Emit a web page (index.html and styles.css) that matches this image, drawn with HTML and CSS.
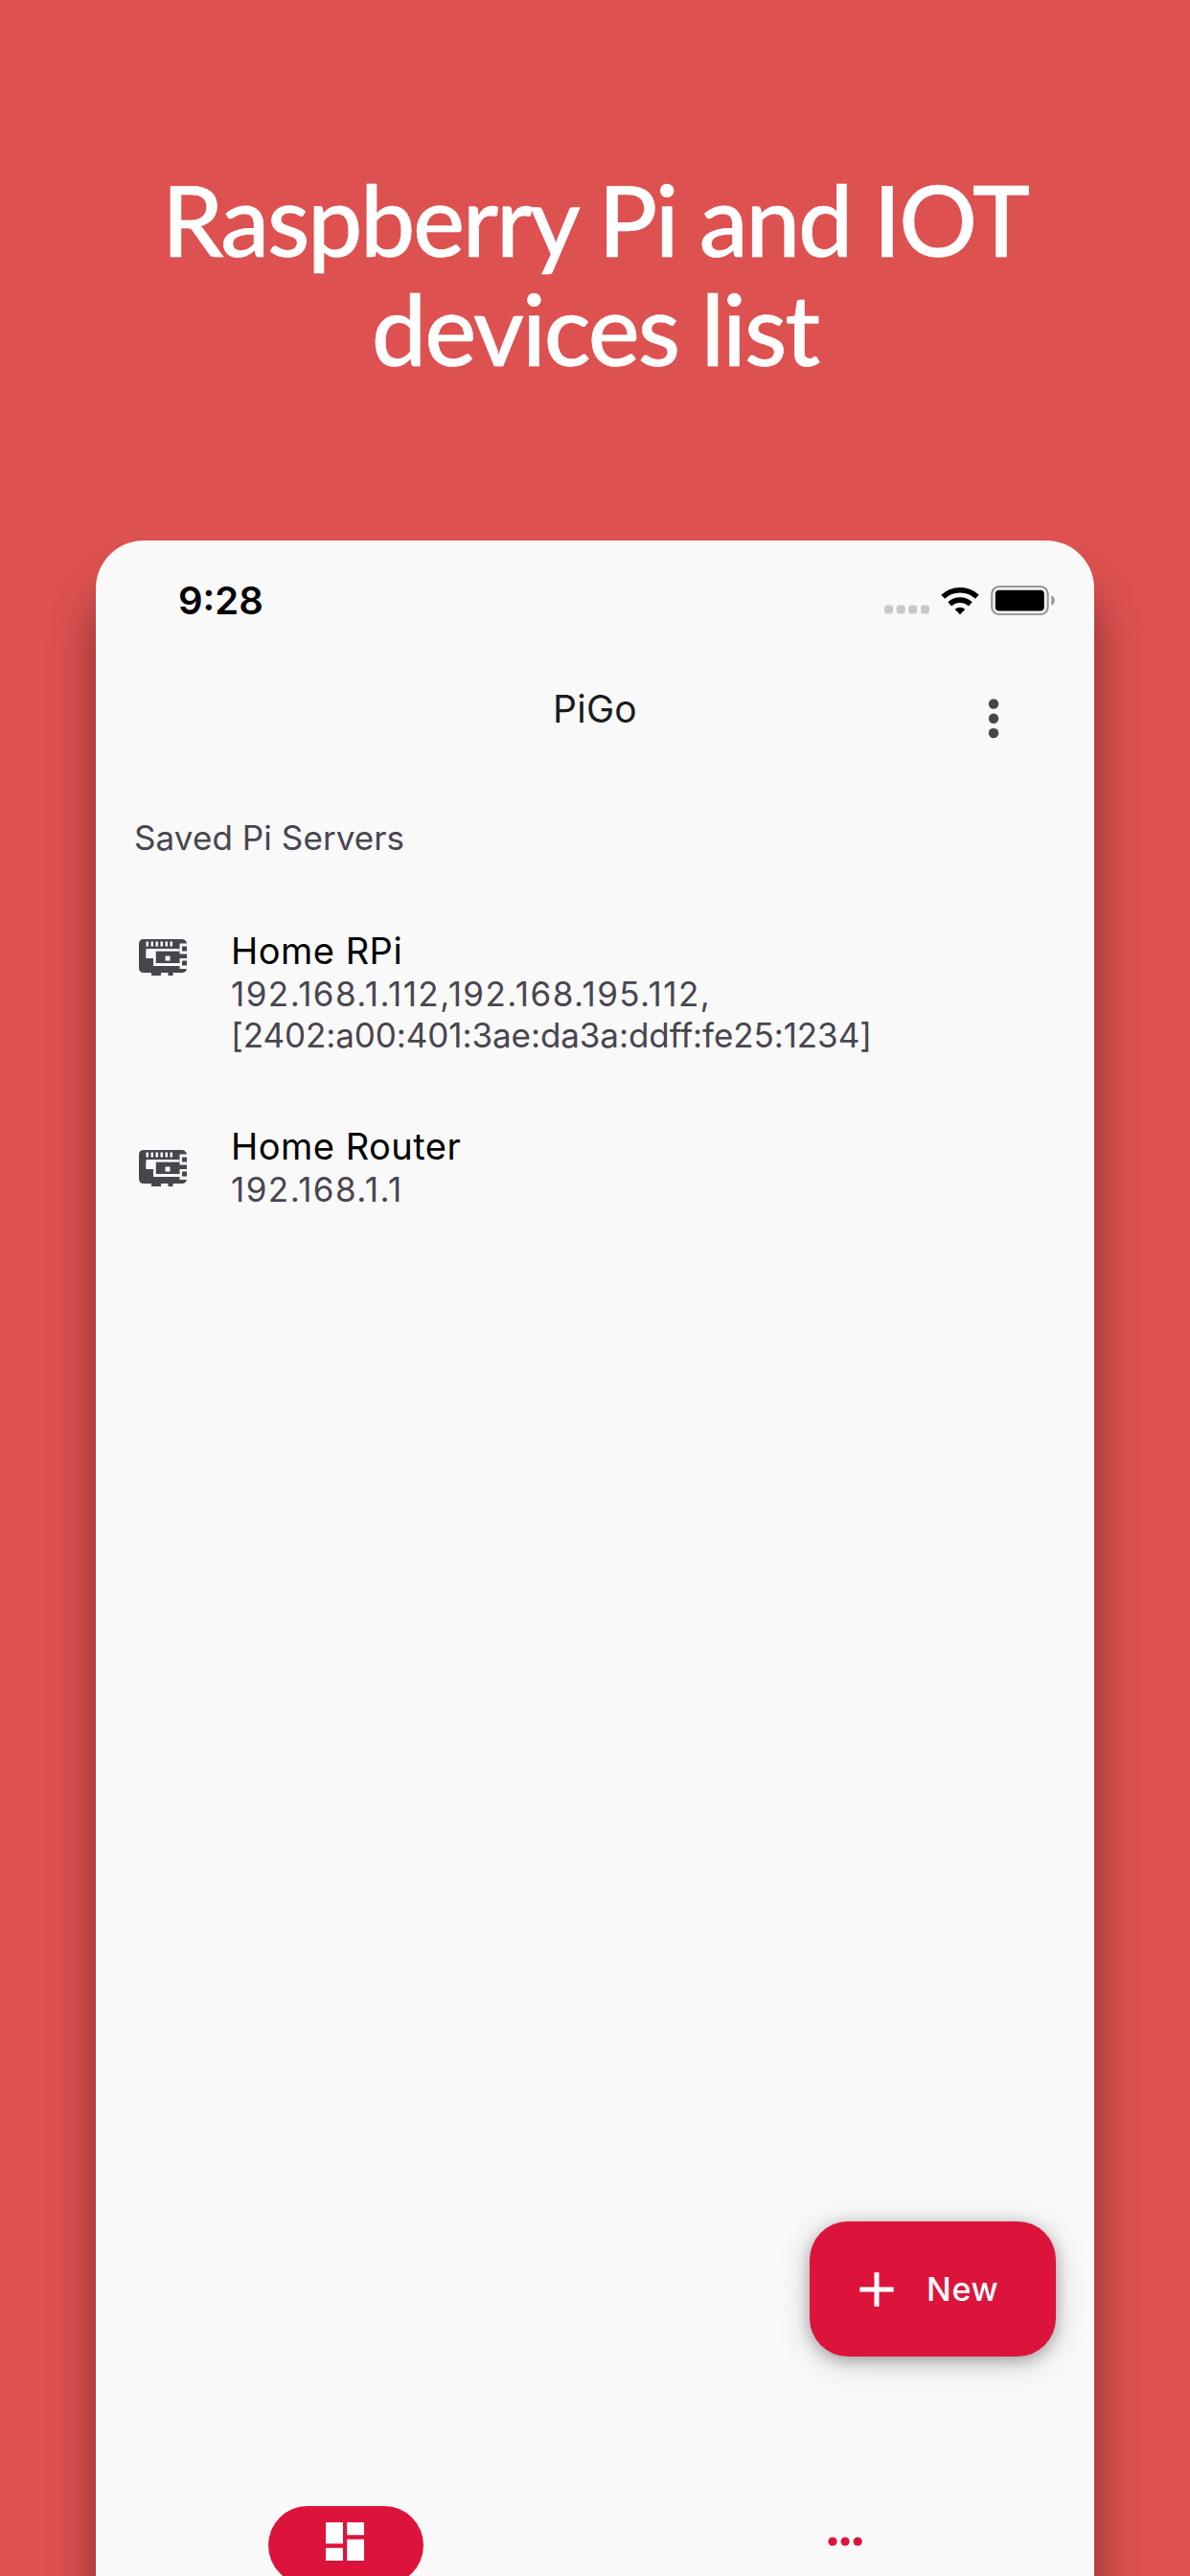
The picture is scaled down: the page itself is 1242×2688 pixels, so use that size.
FILE: index.html
```html
<!DOCTYPE html>
<html lang="en">
<head>
<meta charset="utf-8">
<title>PiGo</title>
<link rel="stylesheet" href="styles.css">
</head>
<body>
<h1 class="headline"><span class="line line-a">Raspberry Pi and IOT</span><span class="line line-b">devices list</span></h1>
<main class="phone">
  <div class="status">
    <span class="time">9:28</span>
    <svg class="status-icons" viewBox="0 0 182 36" width="182" height="36">
      <g fill="#c8c8c8"><rect x="2" y="23.500" width="9" height="9" rx="3"/><rect x="14.7" y="23.500" width="9" height="9" rx="3"/><rect x="27.3" y="23.500" width="9" height="9" rx="3"/><rect x="40" y="23.500" width="9" height="9" rx="3"/></g>
      <path d="M81 33.2l-5.4-5.5a8.4 8.4 0 0 1 10.8 0z"/>
      <path d="M70.2 22.3a16.2 16.2 0 0 1 21.6 0M63.2 14.8a26 26 0 0 1 35.6 0" fill="none" stroke="#000" stroke-width="5.6"/>
      <rect x="114.2" y="4.2" width="58.4" height="28.8" rx="7.5" fill="none" stroke="#9b9a9e" stroke-width="2.2"/>
      <rect x="117.8" y="7.8" width="51" height="21.6" rx="4"/>
      <path d="M176.2 13.6c5 1.5 5 8.700 0 10.200z" fill="#9b9a9e"/>
    </svg>
  </div>
  <header class="appbar">
    <span class="title">PiGo</span>
    <svg class="more" viewBox="0 0 12 42" width="12" height="42" fill="#49454f"><circle cx="6" cy="5.500" r="5.200"/><circle cx="6" cy="20.800" r="5.200"/><circle cx="6" cy="36" r="5.200"/></svg>
  </header>
  <h2 class="section">Saved Pi Servers</h2>
  <ul class="servers">
    <li class="server">
      <svg class="board" viewBox="0 0 50 38" width="50" height="38"><use href="#board"/></svg>
      <div><div class="name">Home RPi</div><div class="addr">192.168.1.112,192.168.195.112,</div><div class="addr v6">[2402:a00:401:3ae:da3a:ddff:fe25:1234]</div></div>
    </li>
    <li class="server second">
      <svg class="board" viewBox="0 0 50 38" width="50" height="38">
        <g id="board">
          <path fill="#49454f" d="M5 0H45Q49 0 50 4.500H42.500V12.500H7.500V20H15V28H42.500V31H50Q49 35 45 35H35.500V38H30.500V35H23V38H13V35H5Q0 35 0 30V5Q0 0 5 0Z"/>
          <path fill="#49454f" d="M17.500 12.500H42.500V15.500H50V20H42.500V25H17.500Z"/>
          <path fill="#f9f9f9" d="M7.500 2.500h2.500v5H7.500zM12.500 2.500H15v5h-2.500zM17.500 2.500H20v5h-2.500zM22.500 2.500H25v5h-2.500zM27.500 2.500H30v5h-2.500zM32.500 2.500H35v5h-2.500zM7.500 10H42.500v2.500H17.500V25H42.500v2.500H15V20H7.500zM27.500 17.500h5v5h-5z"/>
          <path fill="#49454f" d="M45 7.500h5v5h-5zM45 22.500h5v5h-5z"/>
        </g>
      </svg>
      <div><div class="name">Home Router</div><div class="addr">192.168.1.1</div></div>
    </li>
  </ul>
  <button class="fab">
    <svg viewBox="0 0 36 36" width="36" height="36"><path d="M18 .3v35.400M.3 18h35.400" stroke="#fff" stroke-width="5"/></svg>
    <span>New</span>
  </button>
  <nav class="nav">
    <span class="pill"><svg viewBox="0 0 40 40" width="40" height="40" fill="#fff"><path d="M0 0h18v22.200H0zM22.200 0H40v13.300H22.200zM0 26.700h18V40H0zM22.200 17.800H40V40H22.200z"/></svg></span>
    <span class="dots"><svg viewBox="0 0 36 10" width="36" height="10" fill="#dc143c"><circle cx="5" cy="5" r="4.600"/><circle cx="18.100" cy="5" r="4.600"/><circle cx="31.200" cy="5" r="4.600"/></svg></span>
  </nav>
</main>
</body>
</html>
```
FILE: styles.css
```css
* { box-sizing: border-box; }
body {
  margin: 0;
  height: 2688px;
  overflow: hidden;
  background: #dd5150;
  font-family: Inter, "Liberation Sans", sans-serif;
  display: flex;
  flex-direction: column;
  align-items: center;
}
.headline {
  margin: 0;
  padding-top: 172px;
  height: 564px;
  flex: none;
  color: #fff;
  font: 500 102px/114px Lato, sans-serif;
  -webkit-text-stroke: .6px #fff;
  text-align: center;
  white-space: nowrap;
}
.line { display: block; }
.line-a { letter-spacing: -2.3px; }
.line-b { letter-spacing: -2px; }
.phone {
  width: 1042px;
  height: 2200px;
  flex: none;
  display: flex;
  flex-direction: column;
  background: #f9f9f9;
  border-radius: 50px 50px 0 0;
  box-shadow: 0 50px 48px rgba(0, 0, 0, .42);
}
.status {
  height: 122px;
  padding: 37px 40px 0 86px;
  display: flex;
  justify-content: space-between;
}
.time { font-size: 40px; line-height: 52px; font-weight: 600; color: #000; }
.status-icons { margin: 7px -1px 0 0; }
.appbar {
  height: 140px;
  display: grid;
  grid-template-columns: 1fr auto 1fr;
  padding-top: 29px;
}
.title { grid-column: 2; font-size: 39px; line-height: 50px; color: #1c1b1f; letter-spacing: .3px; }
.more { justify-self: end; margin: 14px 99px 0 0; }
.section {
  margin: 0;
  padding-left: 40px;
  height: 140px;
  font-size: 35px;
  line-height: 96px;
  font-weight: 400;
  letter-spacing: .1px;
  color: #49454f;
}
.servers { list-style: none; margin: 0; padding: 0 0 0 45px; height: 1352px; }
.server { display: flex; gap: 46px; height: 204px; }
.board { flex: none; margin-top: 14px; }
.second .board { margin-top: 30px; }
.name { font-size: 38px; line-height: 48px; color: #000; padding-top: 2px; letter-spacing: .5px; }
.addr { font-size: 35px; line-height: 43px; color: #49454f; letter-spacing: 1.45px; }
.v6 { letter-spacing: -.08px; }
.fab {
  align-self: flex-end;
  margin-right: 40px;
  width: 257px;
  height: 141px;
  flex: none;
  border: 0;
  padding: 0 0 0 52px;
  display: flex;
  align-items: center;
  gap: 34px;
  border-radius: 40px;
  background: #dc143c;
  color: #fff;
  font: 500 34px/42px Inter, sans-serif;
  letter-spacing: .7px;
  box-shadow: 0 4px 16px rgba(0, 0, 0, .28), 0 6px 36px rgba(0, 0, 0, .16);
}
.nav {
  display: grid;
  grid-template-columns: 1fr 1fr;
  justify-items: center;
  padding-top: 156px;
}
.pill {
  width: 162px;
  height: 82px;
  border-radius: 41px;
  background: #dc143c;
  padding: 17px 0 0 60px;
}
.dots { padding-top: 32px; }
.dots svg, .pill svg { display: block; }
```
